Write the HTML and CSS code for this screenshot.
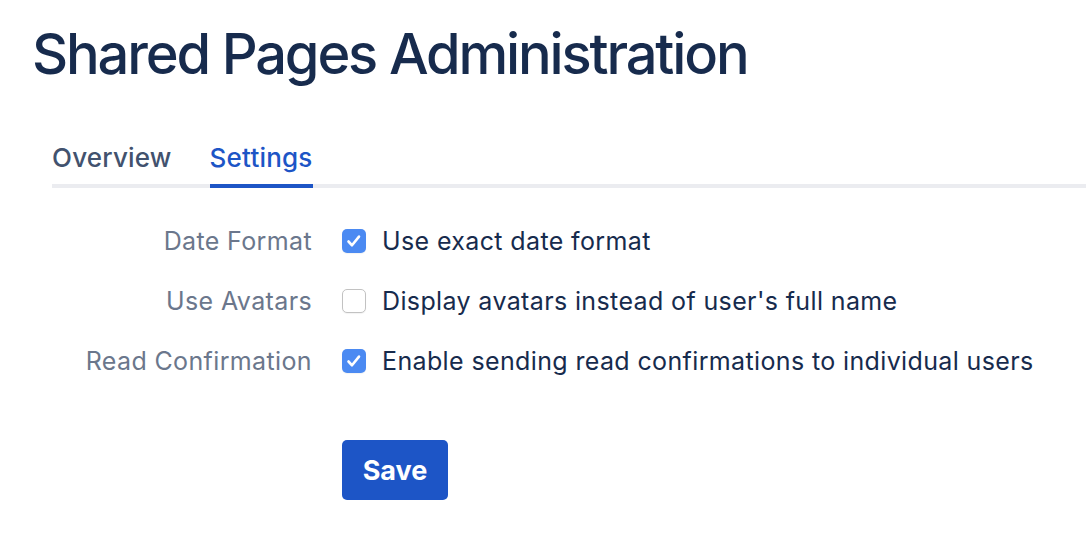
FILE: index.html
```html
<!DOCTYPE html>
<html>
<head>
  <title>Shared Pages Administration</title>
  <link rel="stylesheet" href="styles.css">
</head>
<body>
  <h1 class="page-title">Shared Pages Administration</h1>
  <main class="content">
    <nav class="tabs">
      <a class="tab">Overview</a>
      <a class="tab active">Settings</a>
    </nav>
    <form class="settings">
      <div class="field-label">Date Format</div>
      <label class="option">
        <span class="box checked">
          <svg width="24" height="24" viewBox="0 0 24 24"><path d="M6.5 12.5 L10 16.3 L17 7.6" fill="none" stroke="#fff" stroke-width="2.6" stroke-linecap="round" stroke-linejoin="round"/></svg>
        </span>
        Use exact date format
      </label>

      <div class="field-label">Use Avatars</div>
      <label class="option">
        <span class="box"></span>
        Display avatars instead of user's full name
      </label>

      <div class="field-label">Read Confirmation</div>
      <label class="option">
        <span class="box checked">
          <svg width="24" height="24" viewBox="0 0 24 24"><path d="M6.5 12.5 L10 16.3 L17 7.6" fill="none" stroke="#fff" stroke-width="2.6" stroke-linecap="round" stroke-linejoin="round"/></svg>
        </span>
        Enable sending read confirmations to individual users
      </label>

      <div class="actions">
        <button type="button" class="save">Save</button>
      </div>
    </form>
  </main>
</body>
</html>
```

FILE: styles.css
```css
:root {
  --text-dark: #172b4d;
  --text-tab: #42526e;
  --text-grey: #6b778c;
  --blue: #1d55c6;
  --check-blue: #4b8af2;
  --line-grey: #ebecf0;
}

* {
  margin: 0;
  padding: 0;
  box-sizing: border-box;
}

body {
  font-family: 'Inter', 'Noto Sans', sans-serif;
  background: #fff;
  color: var(--text-dark);
  padding-left: 32px;
}

.page-title {
  margin-top: 20px;
  font-size: 56px;
  line-height: 68px;
  font-weight: 500;
  letter-spacing: -2.15px;
  color: var(--text-dark);
}

.content {
  padding-left: 20px;
}

.tabs {
  display: flex;
  gap: 38px;
  margin-top: 54px;
  border-bottom: 4px solid var(--line-grey);
}

.tab {
  font-size: 26px;
  line-height: 32px;
  font-weight: 500;
  letter-spacing: 0.2px;
  color: var(--text-tab);
  padding-bottom: 10px;
  margin-bottom: -4px;
  border-bottom: 4px solid transparent;
}

.tab.active {
  color: var(--blue);
  border-bottom-color: var(--blue);
}

.settings {
  display: grid;
  grid-template-columns: 260px 1fr;
  column-gap: 30px;
  row-gap: 28px;
  margin-top: 37px;
  font-size: 25px;
  line-height: 32px;
  letter-spacing: 0.37px;
}

.field-label {
  text-align: right;
  color: var(--text-grey);
}

.option {
  display: flex;
  align-items: center;
  gap: 16px;
  color: var(--text-dark);
}

.box {
  flex: none;
  width: 24px;
  height: 24px;
  border-radius: 5px;
  border: 1px solid #c2c2c2;
  background: #fff;
  box-shadow: 0 1px 1px rgba(0, 0, 0, 0.05);
  display: flex;
}

.box.checked {
  border: none;
  background: var(--check-blue);
}

.actions {
  grid-column: 2;
  margin-top: 35px;
}

.save {
  width: 106px;
  height: 60px;
  border: none;
  border-radius: 5px;
  background: var(--blue);
  color: #fff;
  font-family: inherit;
  font-size: 27px;
  font-weight: 700;
  letter-spacing: 0;
}
```
